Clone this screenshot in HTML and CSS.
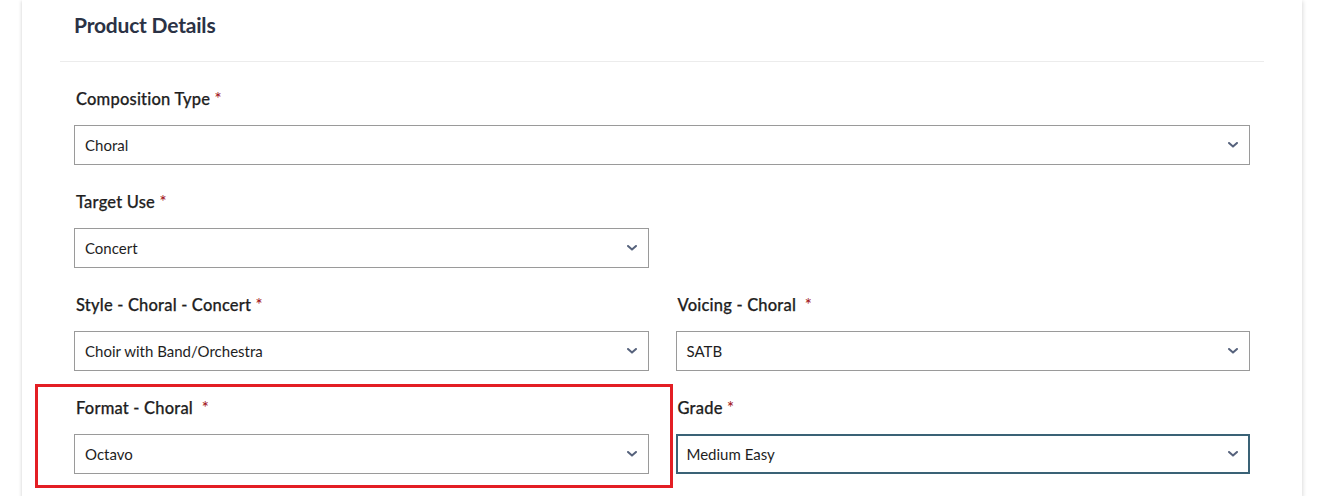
FILE: index.html
```html
<!DOCTYPE html>
<html lang="en">
<head>
<meta charset="utf-8">
<title>Product Details</title>
<link rel="stylesheet" href="styles.css">
</head>
<body>
<div class="page">
  <section class="card">
    <header class="card-header">
      <h2 class="card-title">Product Details</h2>
    </header>
    <div class="card-body">
      <div class="field">
        <label class="field-label">Composition Type <span class="req">*</span></label>
        <div class="select">
          <span class="select-value">Choral</span>
          <svg class="chevron" viewBox="0 0 10 6" width="10" height="6"><path d="M1 1l4 3.6L9 1" /></svg>
        </div>
      </div>

      <div class="grid">
        <div class="field">
          <label class="field-label">Target Use <span class="req">*</span></label>
          <div class="select">
            <span class="select-value">Concert</span>
            <svg class="chevron" viewBox="0 0 10 6" width="10" height="6"><path d="M1 1l4 3.6L9 1" /></svg>
          </div>
        </div>
        <div></div>

        <div class="field">
          <label class="field-label">Style - Choral - Concert <span class="req">*</span></label>
          <div class="select">
            <span class="select-value">Choir with Band/Orchestra</span>
            <svg class="chevron" viewBox="0 0 10 6" width="10" height="6"><path d="M1 1l4 3.6L9 1" /></svg>
          </div>
        </div>
        <div class="field">
          <label class="field-label">Voicing - Choral &nbsp;<span class="req">*</span></label>
          <div class="select">
            <span class="select-value">SATB</span>
            <svg class="chevron" viewBox="0 0 10 6" width="10" height="6"><path d="M1 1l4 3.6L9 1" /></svg>
          </div>
        </div>

        <div class="field field--flagged">
          <label class="field-label">Format - Choral &nbsp;<span class="req">*</span></label>
          <div class="select">
            <span class="select-value">Octavo</span>
            <svg class="chevron" viewBox="0 0 10 6" width="10" height="6"><path d="M1 1l4 3.6L9 1" /></svg>
          </div>
        </div>
        <div class="field">
          <label class="field-label">Grade <span class="req">*</span></label>
          <div class="select select--focus">
            <span class="select-value">Medium Easy</span>
            <svg class="chevron" viewBox="0 0 10 6" width="10" height="6"><path d="M1 1l4 3.6L9 1" /></svg>
          </div>
        </div>
      </div>
    </div>
  </section>
</div>
</body>
</html>
```

FILE: styles.css
```css
* {
  box-sizing: border-box;
}

html, body {
  margin: 0;
  background: #ffffff;
}

body {
  font-family: "Lato", "Noto Sans", sans-serif;
  color: #222222;
}

.page {
  padding: 0 32px 0 22px;
}

.card {
  width: 1280px;
  min-height: 496px;
  background: #ffffff;
  padding: 0 38px;
  box-shadow: -2px 0 3px -1px rgba(0, 0, 0, 0.12), 2px 0 4px -1px rgba(0, 0, 0, 0.14);
}

.card-header {
  padding: 10px 14px 0;
  height: 62px;
  border-bottom: 1px solid #ececec;
}

.card-title {
  margin: 0;
  font-size: 21px;
  line-height: 30px;
  font-weight: 700;
  color: #2b3245;
  letter-spacing: -0.2px;
}

.card-body {
  padding: 25px 14px 0;
}

.grid {
  display: grid;
  grid-template-columns: 1fr 1fr;
  column-gap: 27px;
}

.field {
  position: relative;
  padding-bottom: 25px;
}

.field-label {
  display: block;
  height: 24px;
  line-height: 24px;
  font-size: 16.5px;
  font-weight: 500;
  letter-spacing: 0.2px;
  -webkit-text-stroke: 0.25px #1f1f1f;
  color: #1f1f1f;
  margin-bottom: 14px;
  padding-left: 2px;
}

.req {
  color: #a3191e;
  -webkit-text-stroke: 0;
}

.select {
  display: flex;
  align-items: center;
  justify-content: space-between;
  height: 40px;
  border: 1px solid #9a9a9a;
  padding: 0 11px 0 10px;
  font-size: 15px;
  color: #1e1e1e;
}

.select--focus {
  border: 2px solid #3a6276;
  padding: 0 10px 0 9px;
}

.chevron {
  fill: none;
  stroke: #56627c;
  stroke-width: 2;
  stroke-linecap: round;
  stroke-linejoin: round;
}

/* review highlight around a flagged field */
.field--flagged::after {
  content: "";
  position: absolute;
  left: -39px;
  right: -24px;
  top: -12px;
  bottom: 11px;
  border: 3px solid #e31e24;
  pointer-events: none;
}
```
